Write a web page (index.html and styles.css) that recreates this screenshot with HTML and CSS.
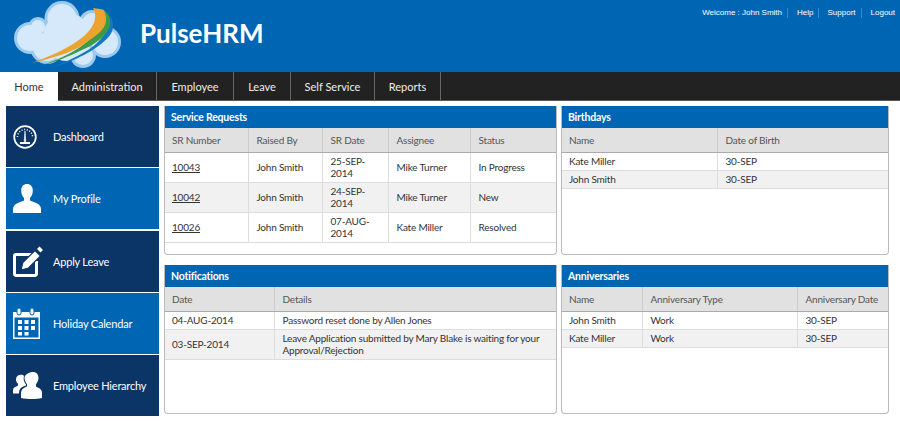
FILE: index.html
```html
<!DOCTYPE html>
<html lang="en">
<head>
    <meta charset="UTF-8">
    <title>PulseHRM</title>
    <link rel="stylesheet" href="styles.css">
</head>
<body>

<header class="top">
    <div class="brand">
        <svg class="logo" width="120" height="72" viewBox="0 0 120 72">
            <g fill="#9cc9ee">
                <circle cx="52" cy="18.500" r="17.500"/>
                <circle cx="28" cy="27" r="10"/>
                <circle cx="20" cy="38" r="16"/>
                <circle cx="37" cy="47" r="17"/>
                <circle cx="82" cy="23" r="13"/>
                <circle cx="95" cy="42" r="16"/>
                <circle cx="73" cy="55" r="13"/>
                <circle cx="57" cy="37" r="24"/>
            </g>
            <g fill="#d5e9fb">
                <circle cx="52" cy="18.500" r="14.500"/>
                <circle cx="28" cy="27" r="7"/>
                <circle cx="20" cy="38" r="13"/>
                <circle cx="37" cy="47" r="14"/>
                <circle cx="82" cy="23" r="10"/>
                <circle cx="95" cy="42" r="13"/>
                <circle cx="73" cy="55" r="10"/>
                <circle cx="57" cy="37" r="24"/>
            </g>
            <path d="M100 16C104 22 104 30 100 35 93 45 70 60 42 67.500 60 60 78 52 88 42 95 35 99 27 100 16z" fill="#1279c0"/>
            <path d="M93 9.500C99 13 102 20 99 28 95 37 84 45 72 50 60 56 45 62 33 65 50 59 68 50 78 41L93 20z" fill="#3f9a45"/>
            <path d="M83 8C87 15 86 24 77 33 68 43 45 55 21.700 63 48 57 68 50 78 41 88 35 96 28 96 20 96 15 95 12 93 9.500z" fill="#eca32f"/>
        </svg>
        <span class="brand-name">PulseHRM</span>
    </div>
    <ul class="user-links">
        <li>Welcome : John Smith</li>
        <li>Help</li>
        <li>Support</li>
        <li>Logout</li>
    </ul>
</header>

<nav class="menu">
    <a class="tab active">Home</a>
    <a class="tab">Administration</a>
    <a class="tab">Employee</a>
    <a class="tab">Leave</a>
    <a class="tab">Self Service</a>
    <a class="tab">Reports</a>
</nav>

<div class="content">
    <aside class="side">
        <a class="side-item dark">
            <div class="ico">
                <svg width="24" height="24" viewBox="0 0 24 24" fill="none" stroke="#fff">
                    <circle cx="12" cy="12" r="10.800" stroke-width="1.700"/>
                    <path d="M4.500 12a7.500 7.500 0 0 1 15 0" stroke-width="1.500" stroke-dasharray="1 1.700"/>
                    <path d="M11.200 16.500L12 6l.8 10.500z" fill="#fff" stroke-width=".6"/>
                    <path d="M7 18h10" stroke-width="2"/>
                </svg>
            </div>
            <span>Dashboard</span>
        </a>
        <a class="side-item blue">
            <div class="ico">
                <svg width="28" height="29" viewBox="0 0 28 29" fill="#fff">
                    <path d="M14 0c3.500 0 5.800 2.500 5.800 6.500 0 3-1 5.500-2.800 7.500v2.500c2 1.500 11 2.500 11 8.500V29H0v-4c0-6 9-7 11-8.500V14c-1.800-2-2.800-4.500-2.800-7.500C8.200 2.500 10.500 0 14 0z"/>
                </svg>
            </div>
            <span>My Profile</span>
        </a>
        <a class="side-item dark">
            <div class="ico">
                <svg width="30" height="31" viewBox="0 0 30 31">
                    <path d="M19 8.500H3a1.500 1.500 0 0 0-1.500 1.500v18A1.500 1.500 0 0 0 3 29.500h19a1.500 1.500 0 0 0 1.500-1.500V15" fill="none" stroke="#fff" stroke-width="3"/>
                    <path d="M8 24l1.800-7.500L22 4.500l5.500 5.500L15.500 22z" fill="#fff" stroke="#0a3566" stroke-width="1.200"/>
                    <path d="M24 3l2.500-2.500 3.500 3.500L27.500 6.500z" fill="#fff"/>
                </svg>
            </div>
            <span>Apply Leave</span>
        </a>
        <a class="side-item blue">
            <div class="ico">
                <svg width="27" height="31" viewBox="0 0 27 31" fill="#fff">
                    <path d="M0 4h27v27H0zM1.500 9.500v20h24v-20z" fill-rule="evenodd"/>
                    <rect x="4" y="0" width="4" height="7" rx="2" stroke="#0066b3"/>
                    <rect x="17" y="0" width="4" height="7" rx="2" stroke="#0066b3"/>
                    <path d="M5 12h4v4H5zM11.500 12h4v4h-4zM18 12h4v4h-4zM5 18h4v4H5zM11.500 18h4v4h-4zM18 18h4v4h-4zM5 24h4v3.500H5zM11.500 24h4v3.500h-4z"/>
                </svg>
            </div>
            <span>Holiday Calendar</span>
        </a>
        <a class="side-item dark">
            <div class="ico">
                <svg width="29" height="27" viewBox="0 0 29 30" preserveAspectRatio="none" fill="#fff">
                    <path d="M20 0c3.500 0 5.500 3 5.500 6.500 0 3-1 5-2.500 7v2.500c2 1.500 6 2 6 7.500V29c-3 1-7 1-10 1s-8 0-11-1v-5.500c0-5 4-6.500 6-7.500v-2.500c-1.500-2-2.500-4-2.500-7C11.500 3 16.500 0 20 0z"/>
                    <path d="M8 3c1.500 0 2.500.5 3 1.500-1 3.500 0 7 2 9.500v1c-5 1.500-7 4-7 9H0v-3.500c0-3.500 3-4 5-5.500v-2c-1.500-1.500-2-3-2-5C3 5 5 3 8 3z"/>
                </svg>
            </div>
            <span>Employee Hierarchy</span>
        </a>
    </aside>

    <main class="panels">
        <section class="panel">
            <h2>Service Requests</h2>
            <table class="sr">
                <thead>
                    <tr><th>SR Number</th><th>Raised By</th><th>SR Date</th><th>Assignee</th><th>Status</th></tr>
                </thead>
                <tbody>
                    <tr><td><a href="#">10043</a></td><td>John Smith</td><td>25-SEP-2014</td><td>Mike Turner</td><td>In Progress</td></tr>
                    <tr><td><a href="#">10042</a></td><td>John Smith</td><td>24-SEP-2014</td><td>Mike Turner</td><td>New</td></tr>
                    <tr><td><a href="#">10026</a></td><td>John Smith</td><td>07-AUG-2014</td><td>Kate Miller</td><td>Resolved</td></tr>
                </tbody>
            </table>
        </section>

        <section class="panel">
            <h2>Birthdays</h2>
            <table class="bd">
                <thead>
                    <tr><th>Name</th><th>Date of Birth</th></tr>
                </thead>
                <tbody>
                    <tr><td>Kate Miller</td><td>30-SEP</td></tr>
                    <tr><td>John Smith</td><td>30-SEP</td></tr>
                </tbody>
            </table>
        </section>

        <section class="panel">
            <h2>Notifications</h2>
            <table class="nt">
                <thead>
                    <tr><th>Date</th><th>Details</th></tr>
                </thead>
                <tbody>
                    <tr><td>04-AUG-2014</td><td>Password reset done by Allen Jones</td></tr>
                    <tr><td>03-SEP-2014</td><td>Leave Application submitted by Mary Blake is waiting for your Approval/Rejection</td></tr>
                </tbody>
            </table>
        </section>

        <section class="panel">
            <h2>Anniversaries</h2>
            <table class="an">
                <thead>
                    <tr><th>Name</th><th>Anniversary Type</th><th>Anniversary Date</th></tr>
                </thead>
                <tbody>
                    <tr><td>John Smith</td><td>Work</td><td>30-SEP</td></tr>
                    <tr><td>Kate Miller</td><td>Work</td><td>30-SEP</td></tr>
                </tbody>
            </table>
        </section>
    </main>
</div>

</body>
</html>
```

FILE: styles.css
```css
* {
    box-sizing: border-box;
}

body {
    margin: 0;
    background-color: #fff;
    font-family: "Lato", "Liberation Sans", sans-serif;
    color: #333;
}

/* Top bar */
.top {
    height: 72px;
    background-color: #0066b3;
    display: flex;
    justify-content: space-between;
    overflow: hidden;
}

.brand {
    display: flex;
    align-items: flex-start;
    padding-left: 10px;
}

.logo {
    display: block;
}

.brand-name {
    margin: 16px 0 0 10px;
    color: #fff;
    font-size: 26px;
    line-height: 34px;
    font-weight: 700;
}

.user-links {
    list-style: none;
    margin: 8px 0 0;
    padding: 0 5px 0 0;
    display: flex;
    font-family: "Liberation Sans", sans-serif;
    font-size: 8px;
    line-height: 10px;
    height: 10px;
    color: #fff;
}

.user-links li {
    padding: 0 5px 0 9px;
    border-left: 1px solid #2a8ad6;
}

.user-links li:first-child {
    border-left: none;
}

.user-links li:nth-child(2) {
    padding-right: 4px;
}

.user-links li:last-child {
    padding-right: 0;
}

/* Main menu */
.menu {
    height: 29px;
    background-color: #222;
    border-bottom: 1px solid #555;
    display: flex;
    font-size: 11px;
}

.tab {
    color: #eee;
    text-align: center;
    line-height: 29px;
    border-right: 1px solid #666;
}

.tab:nth-child(2) { width: 99px; }
.tab:nth-child(3) { width: 77px; }
.tab:nth-child(4) { width: 57px; }
.tab:nth-child(5) { width: 84px; }
.tab:nth-child(6) { width: 66px; }

.tab.active {
    width: 58px;
    height: 29px;
    background-color: #fff;
    color: #333;
    border-right: none;
}

/* Body */
.content {
    display: flex;
    gap: 5px;
    padding: 5px 0 0 6px;
}

.side {
    width: 153px;
    display: flex;
    flex-direction: column;
    gap: 1.250px;
}

.side-item {
    height: 61px;
    display: flex;
    align-items: center;
    color: #fff;
    font-size: 11px;
    letter-spacing: -0.2px;
}

.ico {
    flex: none;
    width: 40px;
    margin-left: 7px;
}

.ico svg {
    display: block;
}

.dark {
    background-color: #0a3566;
}

.blue {
    background-color: #0066b3;
}

.panels {
    display: grid;
    grid-template-columns: 393px 328px;
    grid-template-rows: 149px 149px;
    gap: 10px 4px;
}

.panel {
    border: 1px solid #bbb;
    border-top: none;
    border-radius: 0 0 4px 4px;
    overflow: hidden;
}

.panel h2 {
    margin: 0 -1px;
    height: 22px;
    padding-left: 7px;
    background-color: #0066b3;
    color: #fff;
    font-size: 10.500px;
    font-weight: 700;
    letter-spacing: -0.2px;
    line-height: 22px;
}

/* Tables */
table {
    width: 100%;
    table-layout: fixed;
    border-collapse: collapse;
    font-size: 10px;
    letter-spacing: -0.2px;
}

th {
    height: 24px;
    padding: 0 7px 0 8px;
    background-color: #e1e1e1;
    border-bottom: 1px solid #aaa;
    border-right: 1px solid #ccc;
    color: #555;
    font-weight: 400;
    text-align: left;
}

td {
    padding: 2.500px 7px 2.500px 8px;
    line-height: 12px;
    border-bottom: 1px solid #ddd;
    border-right: 1px solid #ddd;
}

th:first-child,
td:first-child {
    padding-left: 7px;
}

th:last-child,
td:last-child {
    border-right: none;
}

tbody tr:nth-child(even) {
    background-color: #f1f1f1;
}

td a {
    color: #333;
}

.sr td {
    height: 30px;
}

.sr th:nth-child(1) { width: 83px; }
.sr th:nth-child(2) { width: 74px; }
.sr th:nth-child(3) { width: 66px; }
.sr th:nth-child(4) { width: 82px; }

.bd th:nth-child(1) { width: 155px; }

.nt th:nth-child(1) { width: 109px; }

.an th:nth-child(1) { width: 80px; }
.an th:nth-child(2) { width: 155px; }
```
